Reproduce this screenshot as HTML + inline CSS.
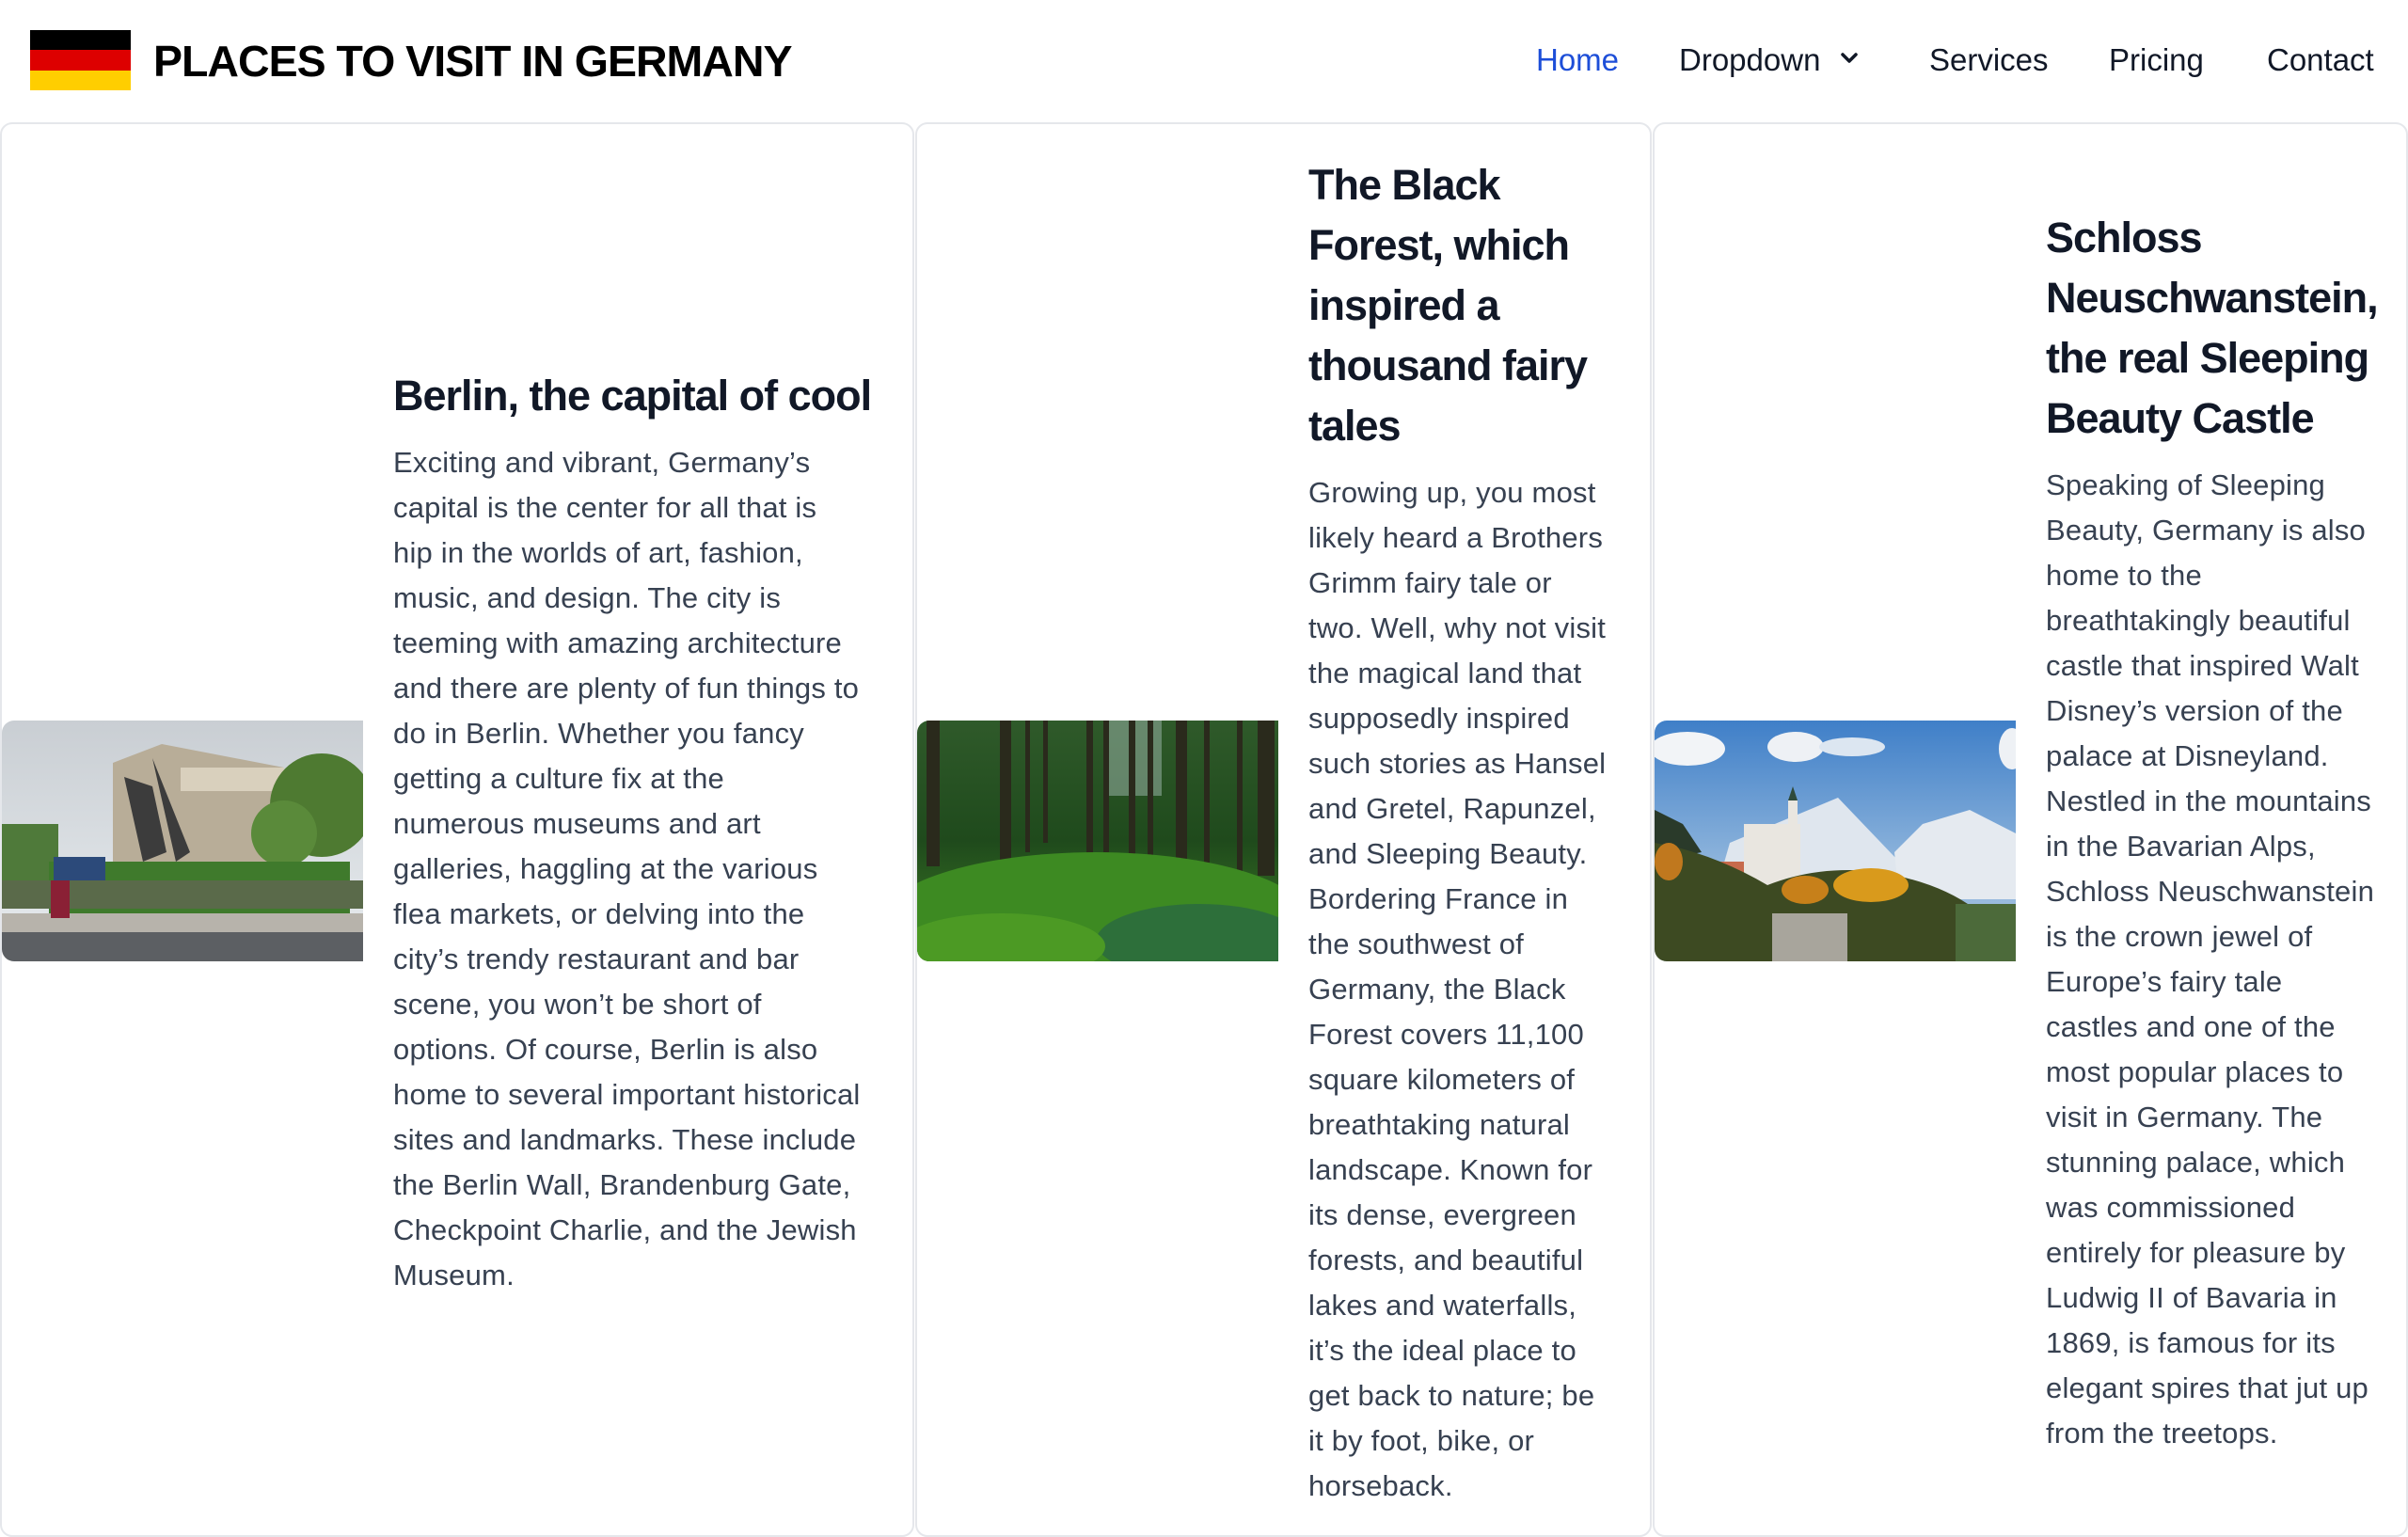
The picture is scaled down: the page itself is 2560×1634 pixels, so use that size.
<!DOCTYPE html>
<html><head><meta charset="utf-8">
<style>
*{margin:0;padding:0;box-sizing:border-box}
html,body{width:2560px;height:1600px;overflow:hidden;background:#fff;font-family:"Liberation Sans",sans-serif}
.hdr{position:absolute;left:0;top:0;width:2560px;height:128px}
.flag{position:absolute;left:32px;top:32px;width:107px;height:64px}
.flag div{height:21.33px}
.title{position:absolute;left:163px;top:35px;font-size:46.5px;font-weight:bold;color:#000;letter-spacing:-1px;line-height:60px;white-space:nowrap}
.nav a{position:absolute;top:44px;font-size:33px;line-height:40px;color:#111827;text-decoration:none;white-space:nowrap}
.card{position:absolute;top:130px;height:1504px;border:2px solid #e5e7eb;border-radius:13px;display:flex;align-items:center;background:#fff}
.img{flex:0 0 384px;width:384px;height:256px;border-radius:13px 0 0 13px;overflow:hidden;position:relative;top:12px;margin-left:0}
.txt{padding:0 16px 0 32px;position:relative;top:2px}
h2{font-size:45px;line-height:64px;letter-spacing:-1px;color:#111827;margin-bottom:15px;white-space:nowrap}
p{font-size:31px;line-height:48px;color:#374151;white-space:nowrap;letter-spacing:0.2px}
</style></head><body>
<div class="hdr">
 <div class="flag"><div style="background:#000"></div><div style="background:#dd0000"></div><div style="background:#ffce00"></div></div>
 <div class="title">PLACES TO VISIT IN GERMANY</div>
 <div class="nav">
  <a style="left:1633px;color:#1d4ed8">Home</a>
  <a style="left:1785px">Dropdown</a>
  <svg style="position:absolute;left:1955px;top:54px" width="22" height="16" viewBox="0 0 22 16"><path d="M4 4 L11 11 L18 4" fill="none" stroke="#111827" stroke-width="3.5" stroke-linecap="round" stroke-linejoin="round"/></svg>
  <a style="left:2051px">Services</a>
  <a style="left:2242px">Pricing</a>
  <a style="left:2410px">Contact</a>
 </div>
</div>

<div class="card" style="left:0;width:972px">
 <div class="img"><svg width="384" height="256" viewBox="0 0 384 256">
  <defs><linearGradient id="sky1" x1="0" y1="0" x2="0" y2="1"><stop offset="0" stop-color="#c9ced3"/><stop offset="1" stop-color="#e8ecef"/></linearGradient></defs>
  <rect width="384" height="256" fill="url(#sky1)"/>
  <polygon points="118,45 170,25 300,50 300,160 118,160" fill="#b8ad98"/>
  <rect x="190" y="50" width="110" height="25" fill="#d9d0bd"/>
  <path d="M130 60 L150 150 L175 140 L160 70 Z M160 40 L200 140 L185 150 Z" fill="#3c3c3c"/>
  <rect x="0" y="110" width="60" height="60" fill="#4f7a3a"/>
  <circle cx="340" cy="90" r="55" fill="#4e7a31"/>
  <circle cx="300" cy="120" r="35" fill="#5a8a3a"/>
  <rect x="50" y="150" width="320" height="65" fill="#3f7a2c"/>
  <rect x="55" y="145" width="55" height="55" fill="#2c4a7a"/>
  <rect x="0" y="170" width="384" height="30" fill="#5a6a4a"/>
  <rect x="0" y="205" width="384" height="20" fill="#b7b3ab"/>
  <rect x="0" y="225" width="384" height="31" fill="#5c5f63"/>
  <rect x="52" y="170" width="20" height="40" fill="#8a2035"/>
 </svg></div>
 <div class="txt">
  <h2>Berlin, the capital of cool</h2>
  <p>Exciting and vibrant, Germany’s<br>capital is the center for all that is<br>hip in the worlds of art, fashion,<br>music, and design. The city is<br>teeming with amazing architecture<br>and there are plenty of fun things to<br>do in Berlin. Whether you fancy<br>getting a culture fix at the<br>numerous museums and art<br>galleries, haggling at the various<br>flea markets, or delving into the<br>city’s trendy restaurant and bar<br>scene, you won’t be short of<br>options. Of course, Berlin is also<br>home to several important historical<br>sites and landmarks. These include<br>the Berlin Wall, Brandenburg Gate,<br>Checkpoint Charlie, and the Jewish<br>Museum.</p>
 </div>
</div>

<div class="card" style="left:973px;width:783px">
 <div class="img"><svg width="384" height="256" viewBox="0 0 384 256">
  <defs><linearGradient id="f1" x1="0" y1="0" x2="0" y2="1"><stop offset="0" stop-color="#2f5a2a"/><stop offset="0.5" stop-color="#1f4a1c"/><stop offset="1" stop-color="#3f7f25"/></linearGradient></defs>
  <rect width="384" height="256" fill="url(#f1)"/>
  <rect x="200" y="0" width="60" height="80" fill="#8ea89a" opacity="0.6"/>
  <g fill="#2a2a1c">
   <rect x="10" y="0" width="14" height="155"/><rect x="88" y="0" width="12" height="160"/><rect x="115" y="0" width="5" height="140"/><rect x="134" y="0" width="5" height="130"/><rect x="180" y="0" width="7" height="145"/><rect x="198" y="0" width="6" height="140"/><rect x="225" y="0" width="7" height="170"/><rect x="245" y="0" width="6" height="150"/><rect x="275" y="0" width="12" height="180"/><rect x="305" y="0" width="6" height="160"/><rect x="340" y="0" width="6" height="175"/><rect x="362" y="0" width="18" height="165"/>
  </g>
  <ellipse cx="190" cy="215" rx="230" ry="75" fill="#3d8a22"/>
  <ellipse cx="300" cy="235" rx="110" ry="40" fill="#2d6f3a"/>
  <ellipse cx="90" cy="240" rx="110" ry="35" fill="#4c9a24"/>
 </svg></div>
 <div class="txt">
  <h2>The Black<br>Forest, which<br>inspired a<br>thousand fairy<br>tales</h2>
  <p>Growing up, you most<br>likely heard a Brothers<br>Grimm fairy tale or<br>two. Well, why not visit<br>the magical land that<br>supposedly inspired<br>such stories as Hansel<br>and Gretel, Rapunzel,<br>and Sleeping Beauty.<br>Bordering France in<br>the southwest of<br>Germany, the Black<br>Forest covers 11,100<br>square kilometers of<br>breathtaking natural<br>landscape. Known for<br>its dense, evergreen<br>forests, and beautiful<br>lakes and waterfalls,<br>it’s the ideal place to<br>get back to nature; be<br>it by foot, bike, or<br>horseback.</p>
 </div>
</div>

<div class="card" style="left:1757px;width:803px">
 <div class="img"><svg width="384" height="256" viewBox="0 0 384 256">
  <defs><linearGradient id="s3" x1="0" y1="0" x2="0" y2="1"><stop offset="0" stop-color="#3f7fc8"/><stop offset="0.6" stop-color="#8fb5dc"/><stop offset="1" stop-color="#a9c4e0"/></linearGradient></defs>
  <rect width="384" height="256" fill="url(#s3)"/>
  <ellipse cx="35" cy="30" rx="40" ry="18" fill="#f2f4f7"/><ellipse cx="150" cy="28" rx="30" ry="16" fill="#eef1f5"/><ellipse cx="210" cy="28" rx="35" ry="10" fill="#dce6f1"/><ellipse cx="380" cy="30" rx="14" ry="22" fill="#eef1f5"/>
  <polygon points="80,130 195,82 260,150 265,200 60,200" fill="#dfe6ee"/>
  <polygon points="255,140 285,110 335,95 384,120 384,190 260,190" fill="#e5eaf0"/>
  <polygon points="0,95 30,110 50,140 0,150" fill="#2a3a2a"/>
  <rect x="95" y="110" width="60" height="70" fill="#e9e6e0"/><rect x="142" y="85" width="10" height="60" fill="#e9e6e0"/><polygon points="142,85 147,70 152,85" fill="#2f4a3a"/>
  <rect x="50" y="150" width="45" height="30" fill="#c76a4c"/>
  <path d="M0 130 Q60 140 120 175 Q170 155 230 160 Q300 170 340 200 L384 195 L384 256 L0 256 Z" fill="#3d4a22"/>
  <ellipse cx="230" cy="175" rx="40" ry="18" fill="#d99a1c"/><ellipse cx="160" cy="180" rx="25" ry="15" fill="#c7801a"/><ellipse cx="15" cy="150" rx="15" ry="20" fill="#c0781e"/>
  <rect x="125" y="205" width="80" height="51" fill="#a8a59c"/>
  <rect x="320" y="195" width="64" height="61" fill="#4c6a3a"/>
 </svg></div>
 <div class="txt">
  <h2>Schloss<br>Neuschwanstein,<br>the real Sleeping<br>Beauty Castle</h2>
  <p>Speaking of Sleeping<br>Beauty, Germany is also<br>home to the<br>breathtakingly beautiful<br>castle that inspired Walt<br>Disney’s version of the<br>palace at Disneyland.<br>Nestled in the mountains<br>in the Bavarian Alps,<br>Schloss Neuschwanstein<br>is the crown jewel of<br>Europe’s fairy tale<br>castles and one of the<br>most popular places to<br>visit in Germany. The<br>stunning palace, which<br>was commissioned<br>entirely for pleasure by<br>Ludwig II of Bavaria in<br>1869, is famous for its<br>elegant spires that jut up<br>from the treetops.</p>
 </div>
</div>
</body></html>
